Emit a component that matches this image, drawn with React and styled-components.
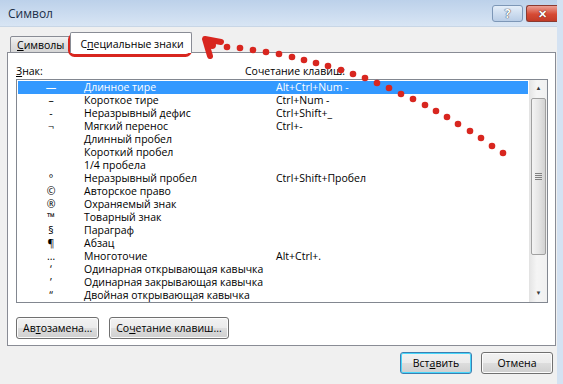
import React from 'react'
import styled, { createGlobalStyle } from 'styled-components';

const rows = [
  { sym: '—', name: 'Длинное тире', keys: 'Alt+Ctrl+Num -' },
  { sym: '–', name: 'Короткое тире', keys: 'Ctrl+Num -' },
  { sym: '-', name: 'Неразрывный дефис', keys: 'Ctrl+Shift+_' },
  { sym: '¬', name: 'Мягкий перенос', keys: 'Ctrl+-' },
  { sym: '', name: 'Длинный пробел', keys: '' },
  { sym: '', name: 'Короткий пробел', keys: '' },
  { sym: '', name: '1/4 пробела', keys: '' },
  { sym: '°', name: 'Неразрывный пробел', keys: 'Ctrl+Shift+Пробел' },
  { sym: '©', name: 'Авторское право', keys: '' },
  { sym: '®', name: 'Охраняемый знак', keys: '' },
  { sym: '™', name: 'Товарный знак', keys: '' },
  { sym: '§', name: 'Параграф', keys: '' },
  { sym: '¶', name: 'Абзац', keys: '' },
  { sym: '…', name: 'Многоточие', keys: 'Alt+Ctrl+.' },
  { sym: '‘', name: 'Одинарная открывающая кавычка', keys: '' },
  { sym: '’', name: 'Одинарная закрывающая кавычка', keys: '' },
  { sym: '“', name: 'Двойная открывающая кавычка', keys: '' },
];

const dots = [
  [227, 47], [240, 48], [253, 50], [266, 52], [279, 54], [292, 57], [304, 60],
  [316, 63], [328, 66], [341, 70], [353, 74], [365, 78], [377, 83], [389, 88],
  [401, 94], [413, 99], [425, 105], [436, 111], [447, 117], [458, 124],
  [470, 131], [481, 138], [492, 146], [503, 153],
];

const App = () => {
  return (
    <Window>
      <GlobalStyle />
      <TitleBar>
        <Title>Символ</Title>
        <Caption>
          <HelpButton>?</HelpButton>
          <CloseButton>✕</CloseButton>
        </Caption>
      </TitleBar>

      <Body>
        <Tabs>
          <Tab><u>С</u>имволы</Tab>
          <Tab active>С<u>п</u>ециальные знаки</Tab>
        </Tabs>

        <Panel>
          <Header>
            <span><u>З</u>нак:</span>
            <span>Сочетание клавиш:</span>
          </Header>

          <ListBox>
            <Rows>
              {rows.map((r, i) => (
                <Row key={i} selected={i === 0}>
                  <Sym>{r.sym}</Sym>
                  <span>{r.name}</span>
                  <span>{r.keys}</span>
                </Row>
              ))}
            </Rows>
            <ScrollBar>
              <Arrow>▲</Arrow>
              <Track>
                <Thumb>
                  <Grip />
                </Thumb>
              </Track>
              <Arrow>▼</Arrow>
            </ScrollBar>
          </ListBox>

          <ButtonRow>
            <Button>Ав<u>т</u>озамена...</Button>
            <Button>Со<u>ч</u>етание клавиш...</Button>
          </ButtonRow>
        </Panel>

        <Footer>
          <Button wide primary>Вст<u>а</u>вить</Button>
          <Button wide>Отмена</Button>
        </Footer>
      </Body>

      <Annotation width="563" height="384" viewBox="0 0 563 384">
        <rect x="69.5" y="34.5" width="121" height="21" rx="5" fill="none" stroke="#d8261f" strokeWidth="3" />
        <path d="M221 42 L205 39 L210 56" fill="none" stroke="#d8261f" strokeWidth="6" strokeLinecap="round" strokeLinejoin="round" />
        <circle cx="212" cy="45" r="4" fill="#d8261f" />
        {dots.map(([x, y], i) => (
          <circle key={i} cx={x} cy={y} r="3.3" fill="#d8261f" />
        ))}
      </Annotation>
    </Window>
  )
}

const GlobalStyle = createGlobalStyle`
  body {
    margin: 0;
    font-family: "Open Sans", "Liberation Sans", sans-serif;
    font-size: 10.5px;
    color: #000;
  }
  u {
    text-decoration: underline;
    text-underline-offset: 1px;
  }
`;

const Window = styled.div`
  position: relative;
  width: 563px;
  height: 384px;
  overflow: hidden;
  background: #f0f0f0;
  border-right: 6px solid #d4e2f2;
  box-sizing: border-box;
`;

const TitleBar = styled.div`
  height: 26px;
  display: flex;
  align-items: center;
  justify-content: space-between;
  padding-left: 8px;
  background: linear-gradient(#bcd1ea, #d8e5f4);
  border-bottom: 1px solid #c8d6e6;
`;

const Title = styled.div`
  font-size: 12px;
  color: #1b2f48;
`;

const Caption = styled.div`
  display: flex;
  gap: 3px;
  align-self: flex-start;
  padding-top: 5px;
`;

const HelpButton = styled.div`
  width: 29px;
  height: 15px;
  border: 1px solid #7d97b7;
  border-radius: 3px;
  background: linear-gradient(#e4eef9, #b9cde6);
  color: #fff;
  font-weight: bold;
  font-size: 12px;
  line-height: 15px;
  text-align: center;
  text-shadow: 0 0 1px #334, 0 0 1px #334;
`;

const CloseButton = styled(HelpButton)`
  width: 30px;
  border-color: #8b3a30;
  border-right: none;
  border-radius: 3px 0 0 3px;
  background: linear-gradient(#eba095, #d64a34 55%, #c23b27);
  font-size: 11px;
  text-shadow: 0 0 1px #511, 0 0 1px #511;
`;

const Body = styled.div`
  padding: 6px 1px 0 7px;
`;

const Tabs = styled.div`
  display: flex;
  align-items: flex-end;
  height: 20px;
  padding-left: 3px;
  margin-bottom: -1px;
  position: relative;
`;

const Tab = styled.div`
  height: ${props => props.active ? '21px' : '17px'};
  padding: ${props => props.active ? '2px 7px 0 9px' : '0 6px'};
  margin-left: ${props => props.active ? '-1px' : '0'};
  display: flex;
  align-items: center;
  border: 1px solid #898c95;
  border-bottom: ${props => props.active ? 'none' : '1px solid #898c95'};
  border-radius: 2px 2px 0 0;
  background: ${props => props.active ? '#fff' : 'linear-gradient(#f3f3f3, #e0e0e0 50%, #d6d6d6)'};
  box-sizing: border-box;
  z-index: ${props => props.active ? 1 : 0};
  white-space: nowrap;
`;

const Panel = styled.div`
  height: 294px;
  background: #fff;
  border: 1px solid #898c95;
  box-sizing: border-box;
  padding: 11px 7px 0 8px;
`;

const Header = styled.div`
  display: grid;
  grid-template-columns: 229px 1fr;
  height: 15px;
  line-height: 15px;
`;

const ListBox = styled.div`
  display: flex;
  height: 224px;
  border: 1px solid #828790;
  box-sizing: border-box;
`;

const Rows = styled.div`
  flex: 1;
  padding: 1px;
  overflow: hidden;
`;

const Row = styled.div`
  display: grid;
  grid-template-columns: 66px 192px 1fr;
  height: 13px;
  line-height: 13px;
  white-space: nowrap;
  overflow: hidden;
  background: ${props => props.selected ? '#3399ff' : 'transparent'};
  color: ${props => props.selected ? '#fff' : '#000'};
`;

const Sym = styled.span`
  text-align: center;
`;

const ScrollBar = styled.div`
  width: 17px;
  display: flex;
  flex-direction: column;
  background: linear-gradient(90deg, #e6e6e6, #f5f5f5 40%, #f0f0f0);
  border-left: 1px solid #e3e3e3;
`;

const Arrow = styled.div`
  height: 17px;
  font-size: 6px;
  line-height: 17px;
  text-align: center;
  color: #3a3a3a;
`;

const Track = styled.div`
  flex: 1;
  padding: 1px 0 0;
  display: flex;
`;

const Thumb = styled.div`
  width: 15px;
  height: 157px;
  margin-left: 1px;
  border: 1px solid #a0a0a0;
  border-radius: 2px;
  background: linear-gradient(90deg, #f4f4f4, #e6e6e6 50%, #d2d2d2);
  box-sizing: border-box;
  display: flex;
  align-items: center;
  justify-content: center;
`;

const Grip = styled.div`
  width: 7px;
  height: 7px;
  background: repeating-linear-gradient(#808080 0 1px, transparent 1px 2px);
`;

const ButtonRow = styled.div`
  display: flex;
  gap: 10px;
  margin-top: 14px;
`;

const Button = styled.div`
  height: 22px;
  min-width: ${props => props.wide ? '72px' : '0'};
  padding: 0 ${props => props.wide ? '0' : '6px'};
  display: flex;
  align-items: center;
  justify-content: center;
  box-sizing: border-box;
  border: 1px solid ${props => props.primary ? '#3c7fb1' : '#707070'};
  border-radius: 3px;
  background: linear-gradient(#f2f2f2, #ebebeb 50%, #dddddd 51%, #cfcfcf);
  box-shadow: ${props => props.primary ? 'inset 0 0 0 1px #48d7fb' : 'inset 0 0 0 1px #fcfcfc'};
  white-space: nowrap;
`;

const Footer = styled.div`
  display: flex;
  justify-content: flex-end;
  gap: 9px;
  padding: 6px 3px 0 0;
`;

const Annotation = styled.svg`
  position: absolute;
  left: 0;
  top: 0;
  pointer-events: none;
`;

export default App
